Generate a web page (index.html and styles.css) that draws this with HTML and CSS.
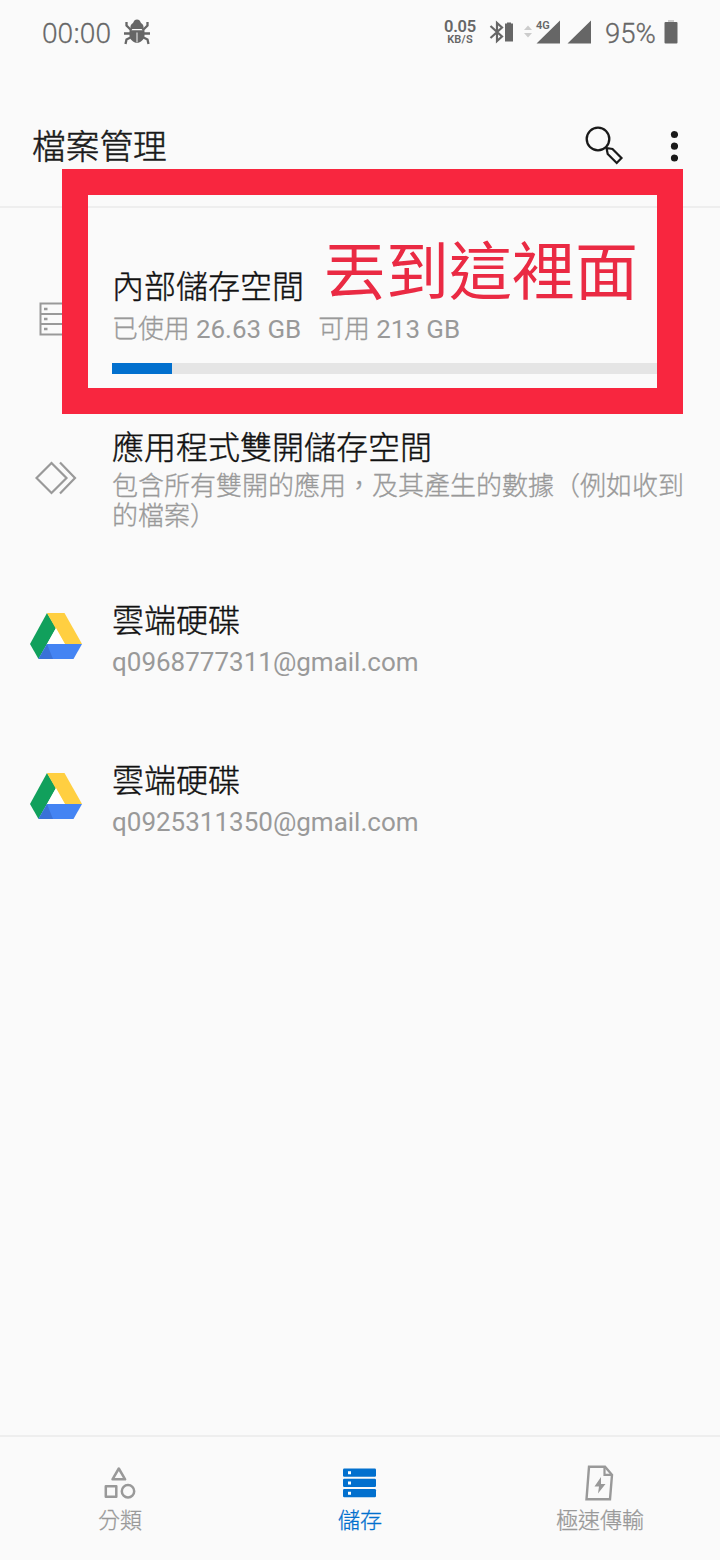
FILE: index.html
```
<!DOCTYPE html>
<html lang="zh-Hant">
<head>
<meta charset="utf-8">
<title>檔案管理</title>
<link rel="stylesheet" href="styles.css">
</head>
<body>
<div class="screen">
  <div class="status">
    <span class="clock">00:00</span>
    <svg class="bug" width="28" height="28" viewBox="0 0 28 28"><path d="M7.500 11C7 8 8 6 10 5C11 2.500 12 1.500 14 1.500s3 1 4 3.500C20 6 21 8 20.500 11z" fill="#666"/><path d="M6.500 12.300h15v5c0 4.500-4 7.200-7.500 7.700c-3.500-.5-7.500-3.200-7.500-7.700z" fill="#666"/><path d="M14 14.500v10" stroke="#ddd" stroke-width="1.200"/><path d="M3.500 4v3.500l5 5M24.500 4v3.500l-5 5M1 15.500h7M27 15.500h-7M8.500 19l-5 2.500-1 4.500M19.500 19l5 2.500 1 4.500" fill="none" stroke="#666" stroke-width="2.300"/></svg>
    <span class="speed"><b>0.05</b><b class="unit">KB/S</b></span>
    <svg class="indicators" width="104" height="28" viewBox="0 0 104 28"><path d="M1.500 8l11.500 10.500-5 4.500v-18l5 4.500L1.500 20" fill="none" stroke="#666" stroke-width="2.200"/><path d="M16 5.500h2V4.500h4v1h2v18h-8z" fill="#666"/><path d="M35 12l4-4.500 4 4.500zM35 15h8l-4 4.500z" fill="#ccc"/><path d="M71 2.500V25.500H47.500zM102 2.500V25.500H78.500z" fill="#666"/><text class="network" x="47" y="10.500">4G</text></svg>
    <span class="percent">95%</span>
    <svg class="battery" width="14" height="24" viewBox="0 0 14 24"><path d="M4 0h6v3H4z" fill="#ccc"/><rect x=".5" y="2" width="13" height="21.500" rx="1" fill="#666"/></svg>
  </div>
  <header class="appbar">
    <h1>檔案管理</h1>
    <svg class="search" width="40" height="40" viewBox="0 0 40 40" fill="none" stroke="#1a1a1a"><circle cx="13" cy="13" r="11.300" stroke-width="2.300"/><path d="M21.500 22l6 1 9 9-4.800 5-9-9z" stroke-width="2.200"/></svg>
    <svg class="more" width="8" height="32" viewBox="0 0 8 32" fill="#1a1a1a"><circle cx="4.500" cy="4.500" r="3.600"/><circle cx="4.500" cy="16.200" r="3.600"/><circle cx="4.500" cy="28" r="3.600"/></svg>
  </header>
  <main class="list">
    <section class="row">
      <div class="lead"><svg width="34" height="34" viewBox="0 0 34 34" fill="none" stroke="#999" stroke-width="2"><path d="M1.500 1.500h31v31h-31zM1.500 12h31M1.500 22h31"/><path d="M5 7h3.500M5 17h3.500M5 27h3.500" stroke-width="2.600"/></svg></div>
      <div class="body storage"><h2>內部儲存空間</h2><p><span>已使用 <span class="latin">26.63 GB</span></span><span class="free">可用 <span class="latin">213 GB</span></span></p><div class="track"><div class="used"></div></div></div>
    </section>
    <section class="row">
      <div class="lead"><svg width="42" height="34" viewBox="0 0 42 34" fill="none" stroke="#999" stroke-width="2.200"><path d="M1.500 17L16.500 2l15 15-15 15zM25 1.500L40 17 25 32.500"/></svg></div>
      <div class="body dual"><h2>應用程式雙開儲存空間</h2><p>包含所有雙開的應用，及其產生的數據（例如收到的檔案）</p></div>
    </section>
    <section class="row">
      <div class="lead drive"><svg width="52" height="46" viewBox="0 0 52 46"><path d="M17 0L0 31l8.500 15L26 15z" fill="#11a05c"/><path d="M17 0h17.500L52 31H34.500z" fill="#ffcf41"/><path d="M17 31h35l-8.500 15h-35z" fill="#4484f3"/><path d="M17 31l6 15H8.500z" fill="#3a72d8"/><path d="M26 15l9 16H17z" fill="#fff"/></svg></div>
      <div class="body cloud"><h2>雲端硬碟</h2><p class="latin">q0968777311@gmail.com</p></div>
    </section>
    <section class="row">
      <div class="lead drive"><svg width="52" height="46" viewBox="0 0 52 46"><path d="M17 0L0 31l8.500 15L26 15z" fill="#11a05c"/><path d="M17 0h17.500L52 31H34.500z" fill="#ffcf41"/><path d="M17 31h35l-8.500 15h-35z" fill="#4484f3"/><path d="M17 31l6 15H8.500z" fill="#3a72d8"/><path d="M26 15l9 16H17z" fill="#fff"/></svg></div>
      <div class="body cloud"><h2>雲端硬碟</h2><p class="latin">q0925311350@gmail.com</p></div>
    </section>
  </main>
  <nav class="tabs">
    <div class="tab"><svg width="34" height="36" viewBox="0 0 34 36" fill="none" stroke="#999" stroke-width="2.500" stroke-linejoin="round"><path d="M15.800 3.500l6.300 10.800H9.500zM2.800 21.300h10.500v10.500H2.800z"/><circle cx="25" cy="26.200" r="6.200"/></svg><span>分類</span></div>
    <div class="tab active"><svg width="34" height="36" viewBox="0 0 34 36"><g fill="#0270ce"><rect x="0" y="3.500" width="33" height="8.300" rx="1.200"/><rect x="0" y="13.700" width="33" height="8.300" rx="1.200"/><rect x="0" y="24" width="33" height="8.300" rx="1.200"/></g><path d="M5 6.200h3v3H5zM5 16.400h3v3H5zM5 26.700h3v3H5z" fill="#fff"/></svg><span>儲存</span></div>
    <div class="tab"><svg width="34" height="36" viewBox="0 0 34 36"><path d="M6 1.800h16l7 8-2 24.500H3.500z" fill="none" stroke="#999" stroke-width="2.400"/><path d="M21.500 1.800v8h7.500" fill="none" stroke="#999" stroke-width="2.200"/><path d="M18 12l-6.500 9.500h4.500l-1 7 7.500-9.500h-4.500z" fill="#999"/></svg><span>極速傳輸</span></div>
  </nav>
  <div class="frame"></div>
  <div class="note">丟到這裡面</div>
</div>
</body>
</html>
```
FILE: styles.css
```
* { box-sizing: border-box; }
body { margin: 0; background: #fafafa; font-family: Roboto, "Noto Sans CJK TC", sans-serif; }
h1, h2, p { margin: 0; }
svg { display: block; flex: none; }
.screen { position: relative; display: flex; flex-direction: column; width: 720px; height: 1560px; background: #fafafa; overflow: hidden; }
.status { display: flex; align-items: center; height: 66px; padding: 0 42px; color: #666; }
.clock { width: 81px; font: 300 27.3px/32px "Noto Sans", sans-serif; -webkit-text-stroke: .3px; }
.bug { margin-top: -3px; }
.speed { display: flex; flex-direction: column; align-items: center; width: 34px; margin-left: 292px; margin-top: -4px; font-size: 16.5px; line-height: 17px; }
.speed b { font-weight: 600; letter-spacing: -.3px; }
.speed .unit { font-size: 11px; line-height: 10px; letter-spacing: .2px; }
.indicators { margin-left: 12px; margin-top: -2px; }
.network { font: 600 11px Roboto, sans-serif; fill: #666; }
.percent { width: 59px; margin-left: 12px; margin-top: 2px; font-size: 27.5px; font-weight: 300; line-height: 32px; -webkit-text-stroke: .3px; }
.battery { margin-top: -2px; }
.appbar { display: flex; align-items: center; height: 142px; padding: 20px 42px 0 32px; border-bottom: 2px solid #eee; color: #1a1a1a; }
h1 { flex: 1; margin-top: 4px; font-size: 33.7px; font-weight: 300; line-height: 44px; -webkit-text-stroke: .5px; }
.search { margin-right: 45px; }
.list { flex: 1; padding-top: 31px; }
.row { display: flex; height: 159.5px; }
.lead { display: flex; align-items: center; justify-content: center; width: 112px; }
.drive { padding-bottom: 3px; }
.body { flex: 1; padding-right: 32px; }
h2 { font-size: 32px; font-weight: 300; line-height: 40px; color: #111; -webkit-text-stroke: .4px; }
p { font-size: 26px; font-weight: 300; line-height: 30px; color: #999; -webkit-text-stroke: .3px; }
.latin { font-weight: 400; -webkit-text-stroke: 0; }
.storage { padding-top: 28px; }
.storage p { margin-top: 7px; font-size: 25.9px; }
.free { margin-left: 17px; }
.track { width: 560px; height: 11px; margin-top: 19px; background: #e5e5e5; }
.used { width: 60px; height: 100%; background: #0270ce; }
.dual { padding-top: 29px; }
.dual p { margin-top: 3px; }
.cloud { padding-top: 43px; }
.cloud p { margin-top: 6px; }
.tabs { display: flex; height: 125px; padding-top: 28px; border-top: 2px solid #eee; color: #999; }
.tab { display: flex; flex: 1; flex-direction: column; align-items: center; font-size: 22px; font-weight: 300; line-height: 26px; -webkit-text-stroke: .3px; }
.tab span { margin-top: 7px; }
.active { color: #0270ce; }
.frame { position: absolute; left: 62px; top: 169px; width: 621px; height: 245px; border: 26px solid #f8263f; }
.note { position: absolute; left: 323px; top: 235px; font-size: 63px; line-height: 76px; color: #ea2a43; white-space: nowrap; }
```
